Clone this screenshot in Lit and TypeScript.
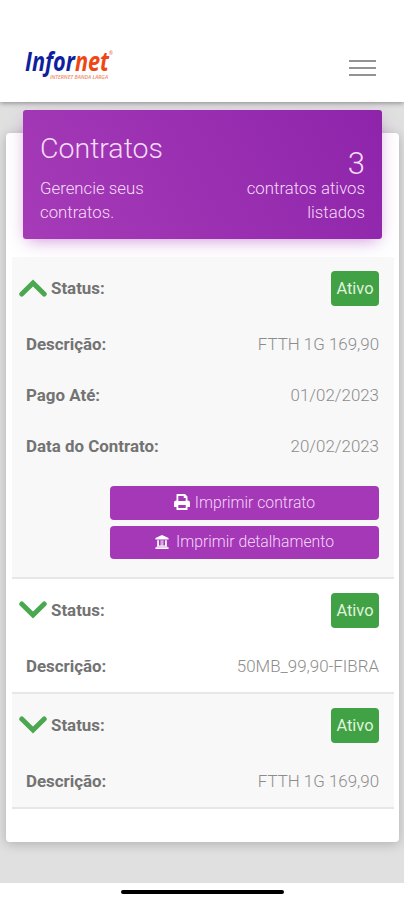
import { LitElement, html, css, svg, nothing } from "lit";
import { customElement, property } from "lit/decorators.js";

interface Contract {
  plan: string;
  open: boolean;
  paidUntil?: string;
  signedOn?: string;
}

const contracts: Contract[] = [
  { plan: "FTTH 1G 169,90", open: true, paidUntil: "01/02/2023", signedOn: "20/02/2023" },
  { plan: "50MB_99,90-FIBRA", open: false },
  { plan: "FTTH 1G 169,90", open: false },
];

const printer = svg`<path fill="currentColor" fill-rule="evenodd" d="M3 0h8l2.500 2.500V6.500q2.500 0 2.500 2V13h-2.500v3h-11v-3H0V8.500q0-2 2.500-2V.5Q2.500 0 3 0ZM4.300 2v5h7.400V4H9.700V2ZM4.300 11v3h7.400v-3Z"/>`;
const bank = svg`<path fill="currentColor" d="M8 0 15.500 3.500V5H.5V3.500ZM2.500 6h2v6h2V6h1v6h1V6h1v6h2V6h2v6.500h.5V13.500h-12v-1h.5ZM.5 14h15v2H.5Z"/>`;

@customElement("contract-row")
class ContractRow extends LitElement {
  @property({ attribute: false }) contract!: Contract;

  static styles = css`
    :host { display: block; border-bottom: 2px solid #e7e7e7; color: #737373; }
    .line { display: flex; align-items: center; justify-content: space-between; height: 51px; padding: 0 15px 0 14px; white-space: nowrap; }
    .status { height: 62px; padding-left: 7px; }
    .lead { display: flex; align-items: center; gap: 4px; }
    .label { font-weight: 700; font-size: 16.900px; padding-bottom: 1px; }
    .value { font-weight: 300; font-size: 16.900px; color: #8c8c8c; padding-bottom: 2px; }
    .badge { width: 48px; height: 35px; line-height: 35px; text-align: center; border-radius: 4px; background: #41a145; color: #e0f3dd; font-size: 16.400px; }
    .chevron { width: 28px; height: 18px; display: block; margin-bottom: 1px; }
    .up { transform: scaleY(-1); }
    .actions { display: flex; flex-direction: column; gap: 6px; margin: 14px 15px 18px 98px; }
    .button { display: flex; align-items: center; justify-content: center; height: 33.500px; border: 0; padding: 0 0 1px; border-radius: 4px; background: #a438b7; color: #f3d5f7; font: 300 15.750px Roboto, sans-serif; }
    .icon { width: 16px; height: 16px; color: #fff; margin-right: 5px; }
    .small { width: 14px; height: 14px; margin-right: 7px; }
  `;

  render() {
    const c = this.contract;
    return html`
      <div class="line status">
        <span class="lead">
          <svg class="chevron ${c.open ? "up" : ""}" viewBox="0 0 28 18">
            <path d="M2.800 3 14 14 25.200 3" fill="none" stroke="#4aa850" stroke-width="5" stroke-linecap="round" />
          </svg>
          <span class="label">Status:</span>
        </span>
        <span class="badge">Ativo</span>
      </div>
      ${this.line("Descrição:", c.plan)}
      ${c.open
        ? html`${this.line("Pago Até:", c.paidUntil)} ${this.line("Data do Contrato:", c.signedOn)}
            <div class="actions">
              <button class="button"><svg class="icon" viewBox="0 0 16 16">${printer}</svg>Imprimir contrato</button>
              <button class="button"><svg class="icon small" viewBox="0 0 16 16">${bank}</svg>Imprimir detalhamento</button>
            </div>`
        : nothing}
    `;
  }

  line(label: string, value?: string) {
    return html`<div class="line"><span class="label">${label}</span><span class="value">${value}</span></div>`;
  }
}

@customElement("app-root")
class AppRoot extends LitElement {
  static styles = css`
    :host { display: flex; flex-direction: column; height: 900px; overflow: hidden; background: #fff; font-family: Roboto, sans-serif; }
    * { box-sizing: border-box; }
    .header { display: flex; align-items: center; justify-content: space-between; height: 102px; padding: 34px 28px 0 25px; background: #fff; box-shadow: 0 1px 5px rgba(0, 0, 0, 0.4); z-index: 1; }
    .logo { width: 92px; height: 34px; display: block; margin-top: -4px; overflow: visible; }
    .menu { display: flex; flex-direction: column; gap: 5px; width: 27px; }
    .bar { height: 2px; background: #929292; }
    .main { height: 781px; padding: 31px 5px 0 6px; background: #e0e0e0; }
    .card { height: 709px; padding: 0 5px 0 6px; background: #fff; border-radius: 4px; box-shadow: 0 2px 12px rgba(0, 0, 0, 0.22); display: flex; flex-direction: column; }
    .banner { display: flex; justify-content: space-between; height: 129px; margin: -23px 12px 18px 11px; padding: 22px 17px 0; border-radius: 3px; color: #f5dcf8; background: linear-gradient(60deg, #a63bb8, #8e24aa); box-shadow: 0 5px 16px -4px rgba(156, 39, 176, 0.5); font-weight: 300; font-size: 16.800px; line-height: 24px; }
    .title { font-size: 28.500px; line-height: 34px; margin-bottom: 10px; font-weight: 300; }
    .intro { width: 130px; }
    .summary { width: 130px; text-align: right; padding-top: 15px; }
    .count { font-size: 31px; line-height: 34px; margin-bottom: -5px; }
    .row:nth-child(odd) { background: #f8f8f8; }
    .footer { display: flex; justify-content: center; height: 17px; padding-top: 7px; }
    .handle { width: 163px; height: 4px; border-radius: 2px; background: #000; }
    .brand { font: italic 700 27px "Open Sans", sans-serif; }
    .tag { font: italic 600 4.600px "Open Sans", sans-serif; }
  `;

  render() {
    return html`
      <header class="header">
        <svg class="logo" viewBox="0 0 92 34">
          <text class="brand" x="0" y="22" textLength="84" lengthAdjust="spacingAndGlyphs"><tspan fill="#101f9e">Infor</tspan><tspan fill="#ee4614">net</tspan></text>
          <text class="tag" x="84" y="5.500" fill="#ee6a45">®</text>
          <text class="tag" x="25" y="29.500" fill="#ee8a6c" textLength="58" lengthAdjust="spacingAndGlyphs">INTERNET BANDA LARGA</text>
        </svg>
        <div class="menu"><span class="bar"></span><span class="bar"></span><span class="bar"></span></div>
      </header>
      <main class="main">
        <section class="card">
          <div class="banner">
            <div><div class="title">Contratos</div><div class="intro">Gerencie seus contratos.</div></div>
            <div class="summary"><div class="count">3</div>contratos ativos listados</div>
          </div>
          <div>${contracts.map((c) => html`<contract-row class="row" .contract=${c}></contract-row>`)}</div>
        </section>
      </main>
      <footer class="footer"><div class="handle"></div></footer>
    `;
  }
}
